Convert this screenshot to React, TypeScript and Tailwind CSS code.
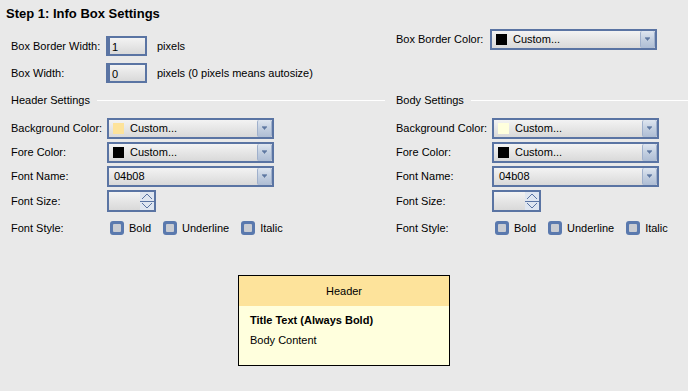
import React from "react";

const font = { fontFamily: '"Liberation Sans", Arial, sans-serif' };

const DropButton = () => (
  <div className="w-[15px] h-full flex items-center justify-center bg-gradient-to-b from-[#dfe6f0] via-[#c3cfe0] to-[#aebdd4] rounded-[2px] border-x border-[#9fb0cc]">
    <svg width="7" height="5" viewBox="0 0 7 5">
      <path d="M1 1h5M2 2h3M3 3h1" stroke="#3d5a8c" strokeWidth="1" />
    </svg>
  </div>
);

const Dropdown = ({ swatch, text }: { swatch?: string; text: string }) => (
  <div className="w-[167px] h-[21px] flex border-2 border-[#5a74a3] bg-gradient-to-b from-[#f3f3f3] to-[#d9d9d9]">
    <div className="flex-1 flex items-center pl-[4px] text-[11px] text-black">
      {swatch && <span className="w-[11px] h-[11px] mr-[6px]" style={{ background: swatch }} />}
      {!swatch && <span className="w-[1px]" />}
      {text}
    </div>
    <DropButton />
  </div>
);

const TextBox = ({ value }: { value: string }) => (
  <div className="w-[41px] h-[20px] border-2 border-l-4 border-[#5a74a3] bg-gradient-to-b from-[#f3f3f3] to-[#d9d9d9] flex items-end pl-[2px] pb-[1px] text-[11px] leading-none">
    {value}
  </div>
);

const Spinner = () => (
  <div className="w-[49px] h-[22px] flex border-2 border-[#5a74a3] bg-gradient-to-b from-[#f3f3f3] to-[#d9d9d9]">
    <div className="flex-1" />
    <div className="w-[14px] flex flex-col bg-[#dfe6f0]">
      <div className="flex-1 flex items-center justify-center border-b border-[#5a74a3]">
        <svg width="12" height="7" viewBox="0 0 12 7">
          <path d="M1 6L6 1L11 6" fill="none" stroke="#5a74a3" strokeWidth="1" />
        </svg>
      </div>
      <div className="flex-1 flex items-center justify-center">
        <svg width="12" height="7" viewBox="0 0 12 7">
          <path d="M1 1L6 6L11 1" fill="none" stroke="#5a74a3" strokeWidth="1" />
        </svg>
      </div>
    </div>
  </div>
);

const Check = ({ label }: { label: string }) => (
  <div className="flex items-center mr-[12px]">
    <span className="w-[14px] h-[14px] rounded-[3px] bg-[#5a79ae] flex items-center justify-center mr-[5px]">
      <span className="w-[8px] h-[8px] bg-[#c9ccd2] rounded-[1px]" />
    </span>
    {label}
  </div>
);

const SettingsColumn = ({ title, bg }: { title: string; bg: string }) => (
  <div>
    <div className="h-[18px] flex items-center">
      <span className="pr-[7px]">{title}</span>
      <div className="flex-1 h-px bg-[#b5b5b5] border-b border-white" />
    </div>
    <div className="mt-[9px] flex flex-col gap-[3px]">
      <div className="flex items-center h-[21px]">
        <span className="w-[96px]">Background Color:</span>
        <Dropdown swatch={bg} text="Custom..." />
      </div>
      <div className="flex items-center h-[21px]">
        <span className="w-[96px]">Fore Color:</span>
        <Dropdown swatch="#000000" text="Custom..." />
      </div>
      <div className="flex items-center h-[21px]">
        <span className="w-[96px]">Font Name:</span>
        <Dropdown text="04b08" />
      </div>
      <div className="flex items-center h-[22px]">
        <span className="w-[96px]">Font Size:</span>
        <Spinner />
      </div>
      <div className="flex items-center h-[18px] mt-[4px]">
        <span className="w-[99px]">Font Style:</span>
        <Check label="Bold" />
        <Check label="Underline" />
        <Check label="Italic" />
      </div>
    </div>
  </div>
);

export default function App() {
  return (
    <div className="w-[688px] h-[391px] bg-[#e9e9e9] text-[11px] text-black overflow-hidden" style={font}>
      <div className="pl-[6px] pt-[4px] text-[13px] font-bold h-[24px]">Step 1: Info Box Settings</div>

      <div className="grid grid-cols-[385px_303px]">
        <div className="pl-[11px] pt-[12px] flex flex-col gap-[7px]">
          <div className="flex items-center h-[20px]">
            <span className="w-[95px]">Box Border Width:</span>
            <TextBox value="1" />
            <span className="ml-[10px]">pixels</span>
          </div>
          <div className="flex items-center h-[20px]">
            <span className="w-[95px]">Box Width:</span>
            <TextBox value="0" />
            <span className="ml-[10px]">pixels (0 pixels means autosize)</span>
          </div>
        </div>
        <div className="pl-[11px] pt-[5px]">
          <div className="flex items-center h-[21px]">
            <span className="w-[94px]">Box Border Color:</span>
            <Dropdown swatch="#000000" text="Custom..." />
          </div>
        </div>
      </div>

      <div className="grid grid-cols-[385px_303px] mt-[8px]">
        <div className="pl-[11px]">
          <SettingsColumn title="Header Settings" bg="#fde39b" />
        </div>
        <div className="pl-[11px]">
          <SettingsColumn title="Body Settings" bg="#ffffdd" />
        </div>
      </div>

      <div className="flex justify-center mt-[38px]">
        <div className="w-[212px] border border-black bg-[#ffffdd]">
          <div className="h-[30px] bg-[#fde39b] flex items-center justify-center">Header</div>
          <div className="px-[11px] pt-[6px] pb-[17px]">
            <div className="font-bold">Title Text (Always Bold)</div>
            <div className="mt-[3px]">Body Content</div>
          </div>
        </div>
      </div>
    </div>
  );
}
